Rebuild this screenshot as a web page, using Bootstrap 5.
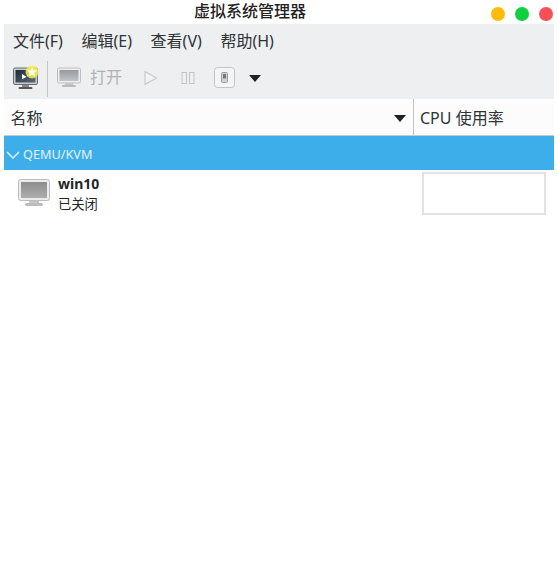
<!doctype html>
<html lang="zh"><head><meta charset="utf-8"><title>虚拟系统管理器</title>
<link rel="stylesheet" href="https://cdn.jsdelivr.net/npm/bootstrap@5.3.0/dist/css/bootstrap.min.css">
<style>
html,body{height:100%;background:#fff}
body{width:558px;height:578px;overflow:hidden;font-family:"Noto Sans","Noto Sans CJK SC",sans-serif;font-size:16px;line-height:1.2;color:#2e3436}
.titlebar{height:24px;padding-right:5px;gap:10px}
.wintitle{left:0;width:500px;text-align:center;font-weight:500;font-size:16px;color:#222;top:2px}
.dot{width:14px;height:14px;border-radius:50%;margin-top:4px}
.d1{background:#febb0c}.d2{background:#0fd03f}.d3{background:#f74f56}
.app{margin:0 4px;width:550px}
.menubar{height:36px;background:#eeeff1;padding:0 9px;gap:18.6px;font-size:16px}
.tools{height:39px;background:#eeeff1;padding:0 0 3px 9px}
.sep{width:1px;height:36px;background:#c4c5c7;margin:0 9px 0 8px;position:relative;top:1px}
.opentext{color:#b0b2b3;font-size:16px;margin-left:9px}
.hdr{height:37px;background:#fcfcfc;border-bottom:1px solid #c9c9c9}
.hname{width:410px;padding:3px 7px 0 6.5px;border-right:1px solid #c4c4c4;height:36px}
.hcpu{padding:3px 0 0 6px}
.caret{width:0;height:0;border-left:6.5px solid transparent;border-right:6.5px solid transparent;border-top:7px solid #222}
.grouprow{height:34px;background:#3daee9;color:#e3f3fc;font-size:12.7px;padding:4px 0 0 2px;gap:3px}
.vmrow{height:54px}
.vmicon{margin:9px 0 0 14px}
.vmtext{margin-left:8px;padding-top:4px;font-size:13.3px;line-height:20px;color:#232627}
.vmname{font-weight:700;font-size:14px}
.vmspace{flex:1}
.graph{width:124px;height:43px;border:2px solid #e4e2e2;background:#fff;margin:2px 8px 0 0}
</style></head><body>
<div class="titlebar position-relative d-flex justify-content-end align-items-center">
<div class="wintitle position-absolute">虚拟系统管理器</div>
<span class="dot d1"></span><span class="dot d2"></span><span class="dot d3"></span>
</div>
<div class="app">
<div class="menubar d-flex align-items-center"><span>文件(F)</span><span>编辑(E)</span><span>查看(V)</span><span>帮助(H)</span></div>
<div class="tools d-flex align-items-center">
<svg width="26" height="26" viewBox="0 0 26 26"><defs><linearGradient id="g1" x1="0" y1="0" x2="1" y2="1"><stop offset="0" stop-color="#1d2c3a"/><stop offset="1" stop-color="#5a6a78"/></linearGradient><linearGradient id="g2" x1="0" y1="0" x2="0" y2="1"><stop offset="0" stop-color="#969ba0"/><stop offset="1" stop-color="#c0c4c8"/></linearGradient><linearGradient id="g3" x1="0" y1="0" x2="0" y2="1"><stop offset="0" stop-color="#8d8d8d"/><stop offset="1" stop-color="#aeaeae"/></linearGradient></defs><rect x=".5" y="3" width="24" height="16.500" rx="1.500" fill="#c9cbcc" stroke="#6b6d6f"/><rect x="2.500" y="5" width="20" height="12.500" fill="url(#g1)"/><path d="M9 9l4.500 2.700-4.500 2.700z" fill="#fff"/><rect x="9" y="20" width="7" height="2" fill="#888"/><rect x="5.500" y="22" width="14" height="2" rx="1" fill="#55585a"/><circle cx="19" cy="7" r="6.500" fill="#f7ee4e" opacity=".85"/><path d="M19 2l1.500 3.200 3.400.4-2.500 2.400.7 3.400-3.100-1.700-3.100 1.700.7-3.400-2.500-2.400 3.400-.4z" fill="#fffde0"/></svg>
<span class="sep"></span>
<svg width="24" height="22" viewBox="0 0 24 22"><rect x=".5" y="1" width="23" height="15" rx="1.500" fill="#eceded" stroke="#bdbfc0"/><rect x="2.500" y="3" width="19" height="11" fill="url(#g2)"/><rect x="8" y="16" width="8" height="2" fill="#c5c6c7"/><rect x="5" y="18" width="14" height="2" rx="1" fill="#b9babb"/></svg>
<span class="opentext">打开</span>
<svg width="18" height="18" viewBox="0 0 18 18" style="margin-left:20px"><path d="M3 2.500v13l11.500-6.500z" fill="#f2f3f3" stroke="#c6c8c9" stroke-width="1.100"/></svg>
<svg width="14" height="14" viewBox="0 0 14 14" style="margin-left:21px"><rect x="1" y="1.500" width="4.500" height="11" fill="#eef0f0" stroke="#c2c4c5"/><rect x="8.500" y="1.500" width="4.500" height="11" fill="#eef0f0" stroke="#c2c4c5"/></svg>
<svg width="22" height="22" viewBox="0 0 22 22" style="margin-left:19px"><rect x=".5" y=".5" width="20" height="20" rx="3" fill="#f5f5f5" stroke="#c3c4c5"/><rect x="7.500" y="5.500" width="6" height="10" rx="1" fill="#d2d3d4" stroke="#9b9d9e"/><rect x="9" y="7" width="3" height="4.500" fill="#77797b"/></svg>
<span class="caret" style="margin-left:13px"></span>
</div>
<div class="hdr d-flex">
<div class="hname d-flex align-items-center justify-content-between"><span>名称</span><span class="caret"></span></div>
<div class="hcpu d-flex align-items-center"><span>CPU 使用率</span></div>
</div>
<div class="grouprow d-flex align-items-center">
<svg width="14" height="10" viewBox="0 0 14 10"><path d="M1 2l6 6 6-6" fill="none" stroke="#e3f3fc" stroke-width="1.500"/></svg>
<span>QEMU/KVM</span></div>
<div class="vmrow d-flex">
<svg class="vmicon" width="32" height="28" viewBox="0 0 32 28"><rect x=".5" y=".5" width="31" height="21" rx="2" fill="#ececec" stroke="#bcbcbc"/><rect x="3" y="3" width="26" height="16" fill="url(#g3)"/><rect x="11" y="22" width="10" height="2" fill="#c6c6c6"/><rect x="7" y="24" width="18" height="3" rx="1.500" fill="#bcbcbc"/></svg>
<div class="vmtext"><div class="vmname">win10</div><div>已关闭</div></div>
<div class="vmspace"></div>
<div class="graph"></div>
</div>
</div>
</body></html>
